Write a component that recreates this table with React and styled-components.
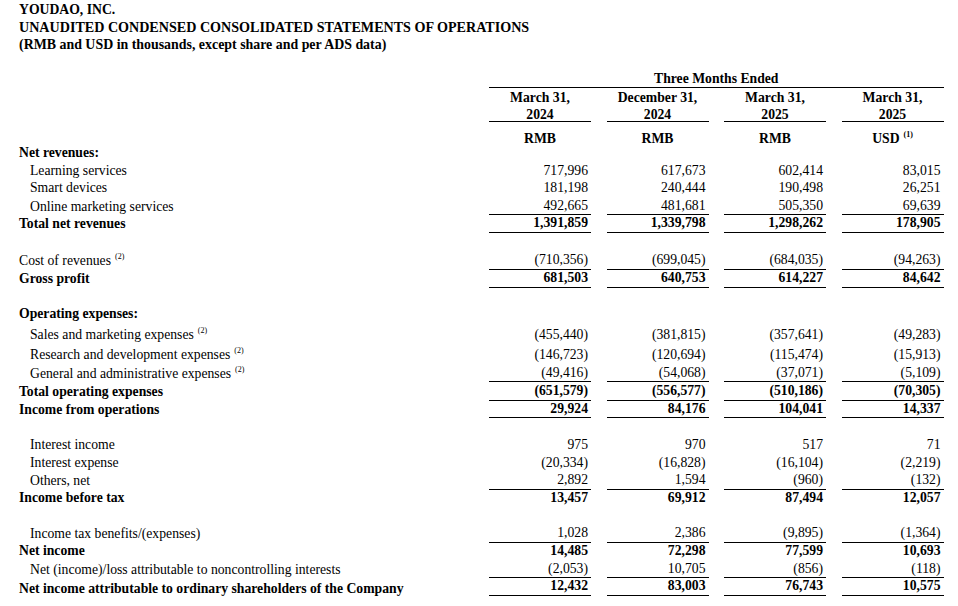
import React from "react";
import styled, { createGlobalStyle } from "styled-components";

const GlobalStyle = createGlobalStyle`
  *, *::before, *::after {
    box-sizing: border-box;
  }
  html, body {
    margin: 0;
    padding: 0;
    background: #fff;
  }
  body {
    font-family: "Liberation Serif", "Times New Roman", serif;
    font-size: 13.7px;
    color: #000;
  }
`;

const Page = styled.div`
  width: 958px;
  padding: 1px 0 0 19px;
`;

const Heading = styled.div`
  font-weight: 700;
  font-size: ${(p) => p.$size || 13.9}px;
  line-height: 17.6px;
  white-space: nowrap;
`;

const Table = styled.div`
  width: 924.5px;
  margin-top: 15.9px;
`;

const Row = styled.div`
  display: grid;
  grid-template-columns: 454.5px repeat(4, 102px);
  column-gap: 15.5px;
  height: ${(p) => p.$h || 17.6}px;
  line-height: 17.6px;
  font-weight: ${(p) => (p.$bold ? 700 : 400)};
`;

const Label = styled.div`
  display: flex;
  align-items: flex-end;
  padding-left: ${(p) => (p.$indent ? "11px" : "0")};
  white-space: nowrap;
`;

const Amount = styled.div`
  display: flex;
  align-items: flex-end;
  justify-content: flex-end;
  padding-right: 3px;
  white-space: nowrap;
  border-bottom: ${(p) =>
    p.$rule === "double"
      ? "3px double #000"
      : p.$rule
      ? "1px solid #000"
      : "none"};
`;

const Note = styled.span`
  font-size: 8px;
  line-height: 1;
  vertical-align: 6px;
  margin-left: 4px;
`;

const GroupHead = styled.div`
  grid-column: 2 / 6;
  text-align: center;
  font-weight: 700;
  border-bottom: 1px solid #000;
`;

const DateHead = styled.div`
  grid-column: ${(p) => p.$col};
  display: flex;
  flex-direction: column;
  justify-content: flex-end;
  align-items: center;
  font-weight: 700;
  line-height: 17px;
  border-bottom: 1px solid #000;

  & > span:last-child {
    margin-bottom: -2px;
  }
`;

const UnitHead = styled.div`
  grid-column: ${(p) => p.$col};
  display: flex;
  align-items: flex-end;
  justify-content: center;
  font-weight: 700;
  line-height: 11px;
`;

const dates = [
  ["March 31,", "2024", "RMB"],
  ["December 31,", "2024", "RMB"],
  ["March 31,", "2025", "RMB"],
  ["March 31,", "2025", "USD"],
];

const rows = [
  { label: "Net revenues:", bold: true },
  { label: "Learning services", indent: true, v: ["717,996", "617,673", "602,414", "83,015"] },
  { label: "Smart devices", indent: true, v: ["181,198", "240,444", "190,498", "26,251"] },
  { label: "Online marketing services", indent: true, v: ["492,665", "481,681", "505,350", "69,639"], rule: "single" },
  { label: "Total net revenues", bold: true, v: ["1,391,859", "1,339,798", "1,298,262", "178,905"], rule: "single" },
  { spacer: true, h: 19.4 },
  { label: "Cost of revenues", note: "(2)", v: ["(710,356)", "(699,045)", "(684,035)", "(94,263)"], rule: "single" },
  { label: "Gross profit", bold: true, v: ["681,503", "640,753", "614,227", "84,642"], rule: "single" },
  { spacer: true, h: 18.6 },
  { label: "Operating expenses:", bold: true },
  { label: "Sales and marketing expenses", indent: true, note: "(2)", h: 21.2, v: ["(455,440)", "(381,815)", "(357,641)", "(49,283)"] },
  { label: "Research and development expenses", indent: true, note: "(2)", h: 20, v: ["(146,723)", "(120,694)", "(115,474)", "(15,913)"] },
  { label: "General and administrative expenses", indent: true, note: "(2)", h: 18.3, v: ["(49,416)", "(54,068)", "(37,071)", "(5,109)"], rule: "single" },
  { label: "Total operating expenses", bold: true, h: 17.7, v: ["(651,579)", "(556,577)", "(510,186)", "(70,305)"], rule: "single" },
  { label: "Income from operations", bold: true, h: 18.3, v: ["29,924", "84,176", "104,041", "14,337"], rule: "single" },
  { spacer: true, h: 17.7 },
  { label: "Interest income", indent: true, h: 17.7, v: ["975", "970", "517", "71"] },
  { label: "Interest expense", indent: true, h: 17.7, v: ["(20,334)", "(16,828)", "(16,104)", "(2,219)"] },
  { label: "Others, net", indent: true, h: 17.9, v: ["2,892", "1,594", "(960)", "(132)"], rule: "single" },
  { label: "Income before tax", bold: true, h: 17.7, v: ["13,457", "69,912", "87,494", "12,057"] },
  { spacer: true, h: 17.7 },
  { label: "Income tax benefits/(expenses)", indent: true, v: ["1,028", "2,386", "(9,895)", "(1,364)"], rule: "single" },
  { label: "Net income", bold: true, h: 17.7, v: ["14,485", "72,298", "77,599", "10,693"] },
  { label: "Net (income)/loss attributable to noncontrolling interests", indent: true, h: 17.7, v: ["(2,053)", "10,705", "(856)", "(118)"], rule: "single" },
  { label: "Net income attributable to ordinary shareholders of the Company", bold: true, h: 20, v: ["12,432", "83,003", "76,743", "10,575"], rule: "double" },
];

export default function App() {
  return (
    <>
      <GlobalStyle />
      <Page>
        <Heading $size={13.7}>YOUDAO, INC.</Heading>
        <Heading $size={14.1}>UNAUDITED CONDENSED CONSOLIDATED STATEMENTS OF OPERATIONS</Heading>
        <Heading>(RMB and USD in thousands, except share and per ADS data)</Heading>

        <Table>
          <Row $h={17.6}>
            <GroupHead>Three Months Ended</GroupHead>
          </Row>
          <Row $h={34.7}>
            {dates.map((d, i) => (
              <DateHead key={i} $col={i + 2}>
                <span>{d[0]}</span>
                <span>{d[1]}</span>
              </DateHead>
            ))}
          </Row>
          <Row $h={22}>
            {dates.map((d, i) => (
              <UnitHead key={i} $col={i + 2}>
                <span>
                  {d[2]}
                  {i === 3 && <Note>(1)</Note>}
                </span>
              </UnitHead>
            ))}
          </Row>

          {rows.map((r, i) =>
            r.spacer ? (
              <Row key={i} $h={r.h} />
            ) : (
              <Row key={i} $h={r.h} $bold={r.bold}>
                <Label $indent={r.indent}>
                  <span>
                    {r.label}
                    {r.note && <Note>{r.note}</Note>}
                  </span>
                </Label>
                {r.v &&
                  r.v.map((val, j) => (
                    <Amount key={j} $rule={r.rule}>
                      {val}
                    </Amount>
                  ))}
              </Row>
            )
          )}
        </Table>
      </Page>
    </>
  );
}
